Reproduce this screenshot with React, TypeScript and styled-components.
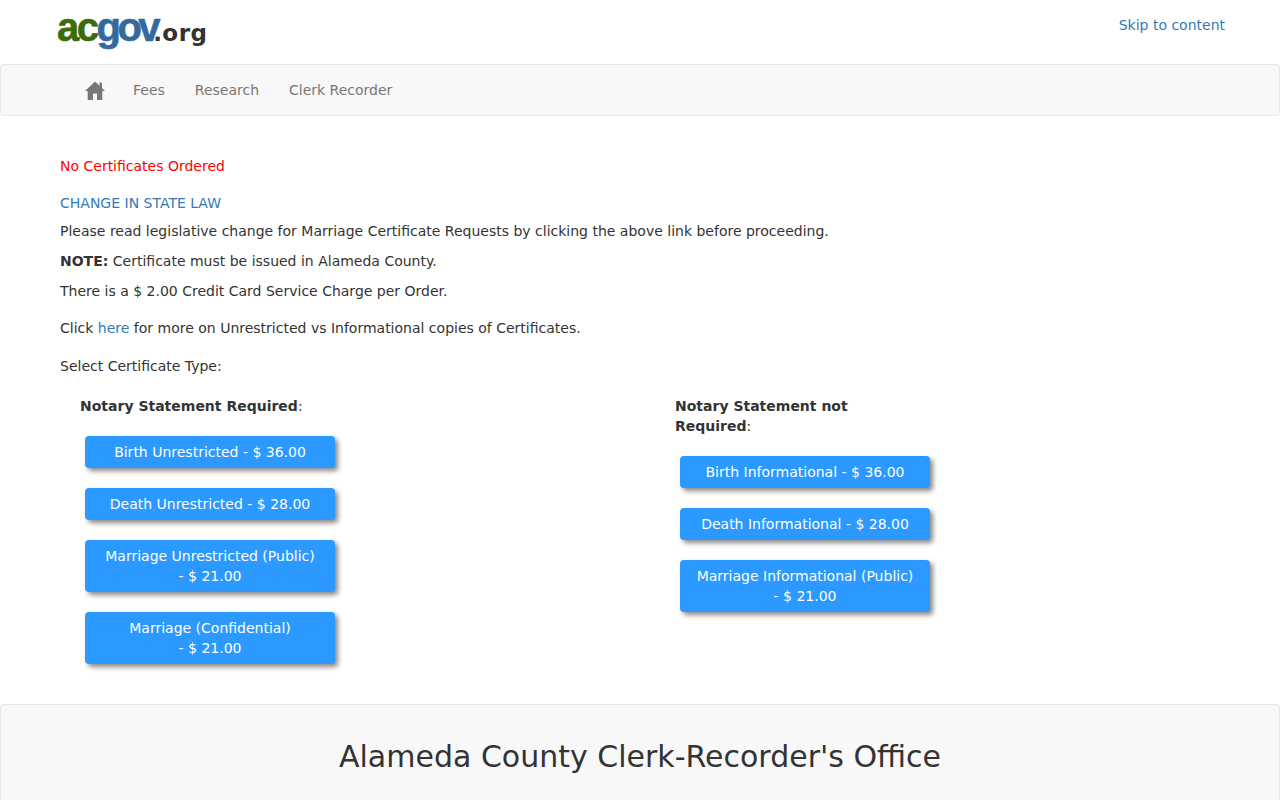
import React from "react";
import styled, { createGlobalStyle } from "styled-components";

const Global = createGlobalStyle`
  html, body { margin: 0; padding: 0; background: #fff; }
  body { font-family: "DejaVu Sans", sans-serif; font-size: 14px; line-height: 20px; color: #333; }
  * { box-sizing: border-box; }
`;

const Header = styled.header`
  height: 64px;
  display: flex;
  justify-content: space-between;
  padding: 0 55px 0 57px;
`;
const Logo = styled.a`
  display: flex;
  align-items: baseline;
  height: 46px;
  padding-top: 11px;
  text-decoration: none;
  white-space: nowrap;
`;
const LogoAc = styled.span`
  font-family: "Liberation Sans", sans-serif;
  font-weight: 700;
  font-size: 40px;
  line-height: 32px;
  letter-spacing: -2.5px;
  color: #3a6b0c;
  -webkit-text-stroke: 0.6px currentColor;
`;
const LogoGov = styled(LogoAc)`
  color: #336a9d;
  letter-spacing: -3.5px;
`;
const LogoOrg = styled.span`
  font-weight: 700;
  font-size: 23px;
  line-height: 32px;
  letter-spacing: 0.5px;
  color: #333;
  margin-left: -4px;
`;
const SkipLink = styled.a`
  color: #337ab7;
  margin-top: 15px;
  text-decoration: none;
`;
const NavBar = styled.nav`
  height: 52px;
  background: #f8f8f8;
  border: 1px solid #e7e7e7;
  border-radius: 4px;
  display: flex;
  align-items: center;
  padding-left: 69px;
`;
const NavLink = styled.a`
  color: #777;
  padding: 15px;
  text-decoration: none;
  display: flex;
  align-items: center;
`;
const HomeGlyph = styled.svg`
  display: block;
  margin-right: -2px;
`;
const Main = styled.main`
  padding: 40px 60px 0;
`;
const Alert = styled.p`
  color: #f00;
  margin: 0 0 17px;
`;
const TextLink = styled.a`
  color: #337ab7;
  text-decoration: none;
`;
const LawLine = styled.p`
  margin: 0 0 8px;
`;
const Para = styled.p`
  margin: 0 0 10px;
`;
const ParaCharge = styled(Para)`
  margin-bottom: 17px;
`;
const ParaClick = styled(Para)`
  margin-bottom: 18px;
`;
const ParaType = styled(Para)`
  margin-bottom: 20px;
`;
const Columns = styled.div`
  display: grid;
  grid-template-columns: 595px 1fr;
  padding-left: 20px;
`;
const Column = styled.section`
  display: flex;
  flex-direction: column;
  align-items: flex-start;
`;
const ColumnTitle = styled.div`
  width: 250px;
  margin-bottom: 20px;
`;
const CertButton = styled.button`
  width: 250px;
  margin: 0 0 20px 5px;
  padding: 6px 12px;
  border: 0;
  border-radius: 4px;
  background: #2b99ff;
  color: #fff;
  font: inherit;
  text-align: center;
  box-shadow: 3px 3px 5px #888;
`;
const ButtonLabel = styled.span`
  white-space: pre-line;
`;
const Footer = styled.footer`
  margin-top: 20px;
  background: #f8f8f8;
  border: 1px solid #e7e7e7;
  border-radius: 4px;
  padding: 19px 19px 30px;
  text-align: center;
`;
const FooterTitle = styled.h1`
  margin: 16px 0 10px;
  font-size: 30px;
  font-weight: 400;
  line-height: 33px;
`;

const HomeIcon = () => (
  <HomeGlyph width="20" height="19" viewBox="0 0 20 19" fill="#777" aria-hidden="true">
    <path d="M10 0.5 L14.6 4.8 V1.6 H17 V7 L20 10 H17.3 V19 H12 V12.5 H8 V19 H2.7 V10 H0 Z" />
  </HomeGlyph>
);

const left = ["Birth Unrestricted - $ 36.00", "Death Unrestricted - $ 28.00", "Marriage Unrestricted (Public)\n- $ 21.00", "Marriage (Confidential)\n- $ 21.00"];
const right = ["Birth Informational - $ 36.00", "Death Informational - $ 28.00", "Marriage Informational (Public)\n- $ 21.00"];

export default function App() {
  return (
    <>
      <Global />
      <Header>
        <Logo href="#">
          <LogoAc>ac</LogoAc>
          <LogoGov>gov</LogoGov>
          <LogoOrg>.org</LogoOrg>
        </Logo>
        <SkipLink href="#">Skip to content</SkipLink>
      </Header>
      <NavBar>
        <NavLink href="#"><HomeIcon /></NavLink>
        <NavLink href="#">Fees</NavLink>
        <NavLink href="#">Research</NavLink>
        <NavLink href="#">Clerk Recorder</NavLink>
      </NavBar>
      <Main>
        <Alert>No Certificates Ordered</Alert>
        <LawLine><TextLink href="#">CHANGE IN STATE LAW</TextLink></LawLine>
        <Para>Please read legislative change for Marriage Certificate Requests by clicking the above link before proceeding.</Para>
        <Para><strong>NOTE:</strong> Certificate must be issued in Alameda County.</Para>
        <ParaCharge>There is a $ 2.00 Credit Card Service Charge per Order.</ParaCharge>
        <ParaClick>Click <TextLink href="#">here</TextLink> for more on Unrestricted vs Informational copies of Certificates.</ParaClick>
        <ParaType>Select Certificate Type:</ParaType>
        <Columns>
          <Column>
            <ColumnTitle><strong>Notary Statement Required</strong>:</ColumnTitle>
            {left.map((t) => <CertButton key={t}><ButtonLabel>{t}</ButtonLabel></CertButton>)}
          </Column>
          <Column>
            <ColumnTitle><strong>Notary Statement not Required</strong>:</ColumnTitle>
            {right.map((t) => <CertButton key={t}><ButtonLabel>{t}</ButtonLabel></CertButton>)}
          </Column>
        </Columns>
      </Main>
      <Footer>
        <FooterTitle>Alameda County Clerk-Recorder's Office</FooterTitle>
      </Footer>
    </>
  );
}
